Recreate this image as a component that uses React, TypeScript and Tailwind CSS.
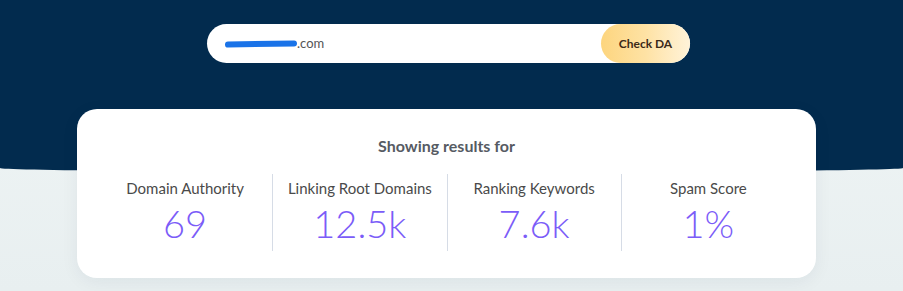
import React from "react";

const stats = [
  { label: "Domain Authority", value: "69" },
  { label: "Linking Root Domains", value: "12.5k" },
  { label: "Ranking Keywords", value: "7.6k" },
  { label: "Spam Score", value: "1%" },
];

export default function App() {
  return (
    <div className="min-h-[291px] w-full bg-gradient-to-b from-[#f1f6f6] to-[#e8eff0] font-['Lato','Open_Sans',sans-serif]">
      <div className="h-[172px] bg-[#022b4e] pr-[6px] pt-6 rounded-b-[50%_4px]">
        <div className="mx-auto flex h-[39px] w-[483px] items-center rounded-full bg-white pl-[14px]">
          <div className="flex flex-1 items-center text-[13px] text-[#555]">
            <span className="relative inline-block h-[8px] w-[76px]">
              <span className="absolute left-1 top-[1px] h-[6px] w-[72px] -rotate-1 rounded-full bg-[#1a73e8]" />
            </span>
            <span>.com</span>
          </div>
          <button className="h-full w-[89px] rounded-full bg-gradient-to-r from-[#fdd57e] via-[#fee2a4] to-[#fff3d9] text-[12px] font-bold text-[#3b2a18]">
            Check DA
          </button>
        </div>
      </div>
      <div className="-mt-[63px] pr-[10px]">
        <div className="mx-auto w-[739px] rounded-[20px] bg-white px-[21px] pb-[27px] pt-[25px] shadow-[0_4px_18px_rgba(0,40,70,0.06)]">
          <h2 className="text-center text-[16px] font-bold text-[#565b63]">Showing results for</h2>
          <div className="mt-[16px] grid grid-cols-4">
            {stats.map((s, i) => (
              <div
                key={s.label}
                className={`flex h-[77px] flex-col items-center pt-[4px] ${i > 0 ? "border-l border-[#d6dce6]" : ""}`}
              >
                <div className="text-[15px] leading-[20px] text-[#4a4a4a]">{s.label}</div>
                <div className="mt-[2px] text-[38px] font-light leading-[46px] text-[#7b5cf8]">{s.value}</div>
              </div>
            ))}
          </div>
        </div>
      </div>
    </div>
  );
}
